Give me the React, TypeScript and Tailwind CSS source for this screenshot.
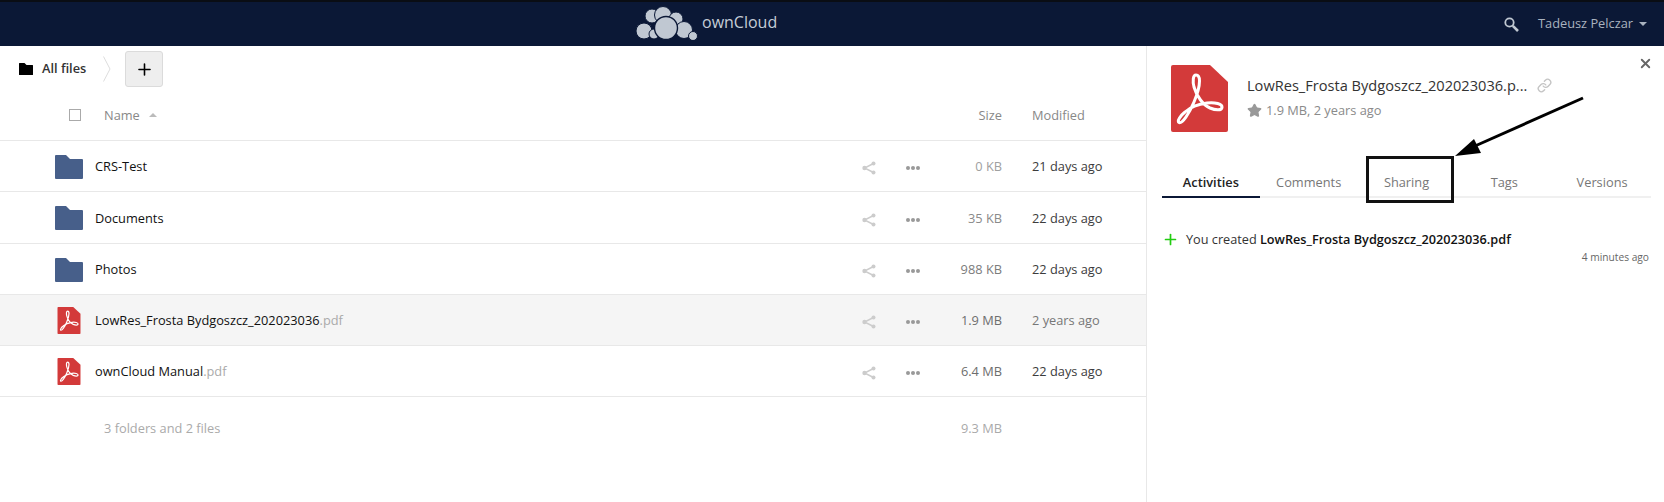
import { Link, Star, X, Plus } from 'lucide-react';

interface FileRow {
  name: string;
  ext?: string;
  size: string;
  sizeColor: string;
  modified: string;
  modifiedColor: string;
  h: string;
  active?: boolean;
}

const rows: FileRow[] = [
  { name: 'CRS-Test', size: '0 KB', sizeColor: 'text-[#a0a0a0]', modified: '21 days ago', modifiedColor: 'text-[#3c3c3c]', h: 'h-[51px]' },
  { name: 'Documents', size: '35 KB', sizeColor: 'text-[#8a8a8a]', modified: '22 days ago', modifiedColor: 'text-[#3c3c3c]', h: 'h-[52px]' },
  { name: 'Photos', size: '988 KB', sizeColor: 'text-[#7c7c7c]', modified: '22 days ago', modifiedColor: 'text-[#3c3c3c]', h: 'h-[51px]' },
  { name: 'LowRes_Frosta Bydgoszcz_202023036', ext: '.pdf', size: '1.9 MB', sizeColor: 'text-[#6e6e6e]', modified: '2 years ago', modifiedColor: 'text-[#777777]', h: 'h-[51px]', active: true },
  { name: 'ownCloud Manual', ext: '.pdf', size: '6.4 MB', sizeColor: 'text-[#6e6e6e]', modified: '22 days ago', modifiedColor: 'text-[#3c3c3c]', h: 'h-[51px]' },
];

const tabs = ['Activities', 'Comments', 'Sharing', 'Tags', 'Versions'];

function Logo() {
  return (
    <svg width="64" height="34" viewBox="0 0 64 34" className="shrink-0">
      <g fill="#c0c8d2" stroke="#0b1836" strokeWidth="1">
        <circle cx="17" cy="10" r="7" />
        <circle cx="28" cy="9" r="8.5" />
        <circle cx="41" cy="13" r="7" />
        <circle cx="9" cy="25" r="8" />
        <circle cx="19" cy="28" r="5" />
        <circle cx="49" cy="24" r="8.5" />
        <circle cx="58" cy="30" r="4.5" />
        <circle cx="31" cy="22" r="11.5" strokeWidth="1.4" />
      </g>
    </svg>
  );
}

function SearchIcon() {
  return (
    <svg viewBox="0 0 15 15" className="w-[15px] h-[15px] mr-[19px]" fill="none" stroke="#c0c8d2">
      <circle cx="5.500" cy="5.500" r="4.200" strokeWidth="1.800" />
      <path d="M8.800 8.800 14 14" strokeWidth="2.600" />
    </svg>
  );
}

function FolderIcon({ className, color }: { className: string; color: string }) {
  return (
    <svg viewBox="0 0 28 24" className={className}>
      <path d="M0 1a1 1 0 0 1 1-1h10l4 4h12a1 1 0 0 1 1 1v18a1 1 0 0 1-1 1H1a1 1 0 0 1-1-1z" fill={color} />
    </svg>
  );
}

function PdfIcon({ className }: { className: string }) {
  return (
    <svg viewBox="0 0 57 67" className={className}>
      <path d="M2 0h37l18 17v48a2 2 0 0 1-2 2H2a2 2 0 0 1-2-2V2a2 2 0 0 1 2-2z" fill="#d33a3a" />
      <path
        d="M25 10C22 10 21.500 16 23 22 25.500 31 32 40 39 43 44 45 50.500 46 51 42.500 51.500 39 44 37 36 38 28 39 19 42.500 14 47 9 51 6 56 8 57.500 11 59 18 49 23 37 26 30 28.500 22 28.500 16 28.500 12 27 10 25 10z"
        fill="none"
        stroke="#ffffff"
        strokeWidth="3"
        strokeLinejoin="round"
      />
    </svg>
  );
}

function ShareIcon() {
  return (
    <svg viewBox="0 0 14 14" className="w-[14px] h-[14px] mt-[2px]" fill="#cccccc" stroke="#cccccc">
      <circle cx="11.500" cy="2.500" r="2" stroke="none" />
      <circle cx="2.500" cy="7" r="2.200" stroke="none" />
      <circle cx="11.500" cy="11.500" r="2" stroke="none" />
      <path d="M11.500 2.500 2.500 7l9 4.500" fill="none" strokeWidth="1.400" />
    </svg>
  );
}

function Dots() {
  return (
    <div className="flex gap-[1px] mt-[2px]">
      <span className="w-[4px] h-[4px] rounded-full bg-[#999999]" />
      <span className="w-[4px] h-[4px] rounded-full bg-[#999999]" />
      <span className="w-[4px] h-[4px] rounded-full bg-[#999999]" />
    </div>
  );
}

export default function App() {
  return (
    <div className="relative w-[1664px] h-[502px] overflow-hidden bg-white flex flex-col font-['Open_Sans',sans-serif] text-[12.800px]">
      <header className="relative h-[46px] shrink-0 bg-[#0b1836] border-t-2 border-[#0a0d14] flex items-center justify-end pr-[17px]">
        <div className="absolute left-[635px] top-[4px] flex items-center gap-[3px]">
          <Logo />
          <span className="text-[16px] text-[#c5cdd6] -mt-[3px]">ownCloud</span>
        </div>
        <SearchIcon />
        <span className="text-[#a9b2bf] text-[12.800px]">Tadeusz Pelczar</span>
        <span className="ml-[6px] w-0 h-0 border-x-[4px] border-x-transparent border-t-[4px] border-t-[#a9b2bf]" />
      </header>

      <div className="flex flex-1 min-h-0">
        <main className="w-[1146px] shrink-0">
          <div className="h-[50px] flex items-center pl-[19px] pb-[4px]">
            <FolderIcon className="w-[14px] h-[12px]" color="#000000" />
            <span className="ml-[9px] font-semibold text-[#333333] -mt-[1px]">All files</span>
            <svg width="8" height="26" viewBox="0 0 8 26" className="ml-[17px]">
              <path d="M.5.5 7 13 .5 25.500" fill="none" stroke="#dddddd" />
            </svg>
            <button className="ml-[14px] w-[38px] h-[36px] bg-[#eeeeee] border border-[#dbdbdb] rounded-[3px] flex items-center justify-center">
              <Plus size={19} strokeWidth={2} className="text-black" />
            </button>
          </div>

          <div className="h-[45px] flex items-center border-b border-[#e8e8e8] text-[#888888]">
            <span className="ml-[69px] w-[12px] h-[12px] border border-[#aaaaaa] -mt-[6px]" />
            <span className="ml-[23px] -mt-[5px]">Name</span>
            <span className="ml-[9px] -mt-[6px] w-0 h-0 border-x-[4px] border-x-transparent border-b-[4px] border-b-[#bbbbbb]" />
            <span className="ml-auto -mt-[5px]">Size</span>
            <span className="ml-[30px] w-[114px] -mt-[5px]">Modified</span>
          </div>

          {rows.map((row) => (
            <div key={row.name} className={`${row.h} flex items-center pt-[2px] border-b border-[#e8e8e8] ${row.active ? 'bg-[#f5f5f5]' : ''}`}>
              <div className="w-[95px] shrink-0 flex justify-start -mt-[1px]">
                {row.ext ? (
                  <PdfIcon className="ml-[57px] w-[24px] h-[27px]" />
                ) : (
                  <FolderIcon className="ml-[55px] w-[28px] h-[24px]" color="#475f8a" />
                )}
              </div>
              <span className="flex-1 text-[#111111]">
                {row.name}
                {row.ext && <span className="text-[#aaaaaa]">{row.ext}</span>}
              </span>
              <ShareIcon />
              <div className="ml-[30px]">
                <Dots />
              </div>
              <span className={`w-[82px] text-right ${row.sizeColor}`}>{row.size}</span>
              <span className={`ml-[30px] w-[114px] ${row.modifiedColor}`}>{row.modified}</span>
            </div>
          ))}

          <div className="h-[62px] flex items-center pt-[2px] text-[#aaaaaa]">
            <span className="ml-[104px]">3 folders and 2 files</span>
            <span className="ml-auto">9.3 MB</span>
            <span className="ml-[30px] w-[114px]" />
          </div>
        </main>

        <aside className="relative flex-1 border-l border-[#e8e8e8] pl-[15px] pr-[13px]">
          <button className="absolute right-[11px] top-[10px] text-[#666666]">
            <X size={15} strokeWidth={3} />
          </button>

          <div className="flex pl-[9px] pt-[19px] h-[130px]">
            <PdfIcon className="w-[57px] h-[67px]" />
            <div className="ml-[19px] pt-[10px]">
              <div className="flex items-center">
                <span className="text-[14.600px] leading-[20px] text-[#333333]">LowRes_Frosta Bydgoszcz_202023036.p...</span>
                <Link size={15} strokeWidth={2.200} className="ml-[10px] text-[#c4c4c4]" />
              </div>
              <div className="flex items-center mt-[6px] text-[#8a8a8a] text-[12.800px]">
                <Star size={15} className="fill-[#999999] text-[#999999]" />
                <span className="ml-[4px]">1.9 MB, 2 years ago</span>
              </div>
            </div>
          </div>

          <nav className="grid grid-cols-5 h-[22px] border-b-2 border-[#f0f0f0]">
            {tabs.map((tab, i) => (
              <div
                key={tab}
                className={`h-[22px] text-center leading-[12px] ${i === 0 ? 'font-semibold text-[#222222] border-b-2 border-[#0b1836]' : 'text-[#777777]'}`}
              >
                {tab}
              </div>
            ))}
          </nav>

          <div className="flex items-center mt-[32px] pl-[2px]">
            <Plus size={17} strokeWidth={2.400} className="text-[#22cc11] -ml-[2px]" />
            <span className="ml-[7px] text-[12.700px] text-[#333333]">
              You created <span className="font-semibold text-[#111111]">LowRes_Frosta Bydgoszcz_202023036.pdf</span>
            </span>
          </div>
          <div className="text-right text-[10.200px] text-[#666666] mt-[1px] pr-[2px]">4 minutes ago</div>
        </aside>
      </div>

      {/* annotation drawn over the screenshot */}
      <div className="absolute left-[1366px] top-[156px] w-[88px] h-[47px] border-[3px] border-[#111111]" />
      <svg className="absolute left-[1440px] top-[90px]" width="150" height="75" viewBox="0 0 150 75">
        <path d="M143 8 35 56" stroke="#000000" strokeWidth="3" fill="none" />
        <path d="M15 66 34 49l7 14z" fill="#000000" />
      </svg>
    </div>
  );
}
